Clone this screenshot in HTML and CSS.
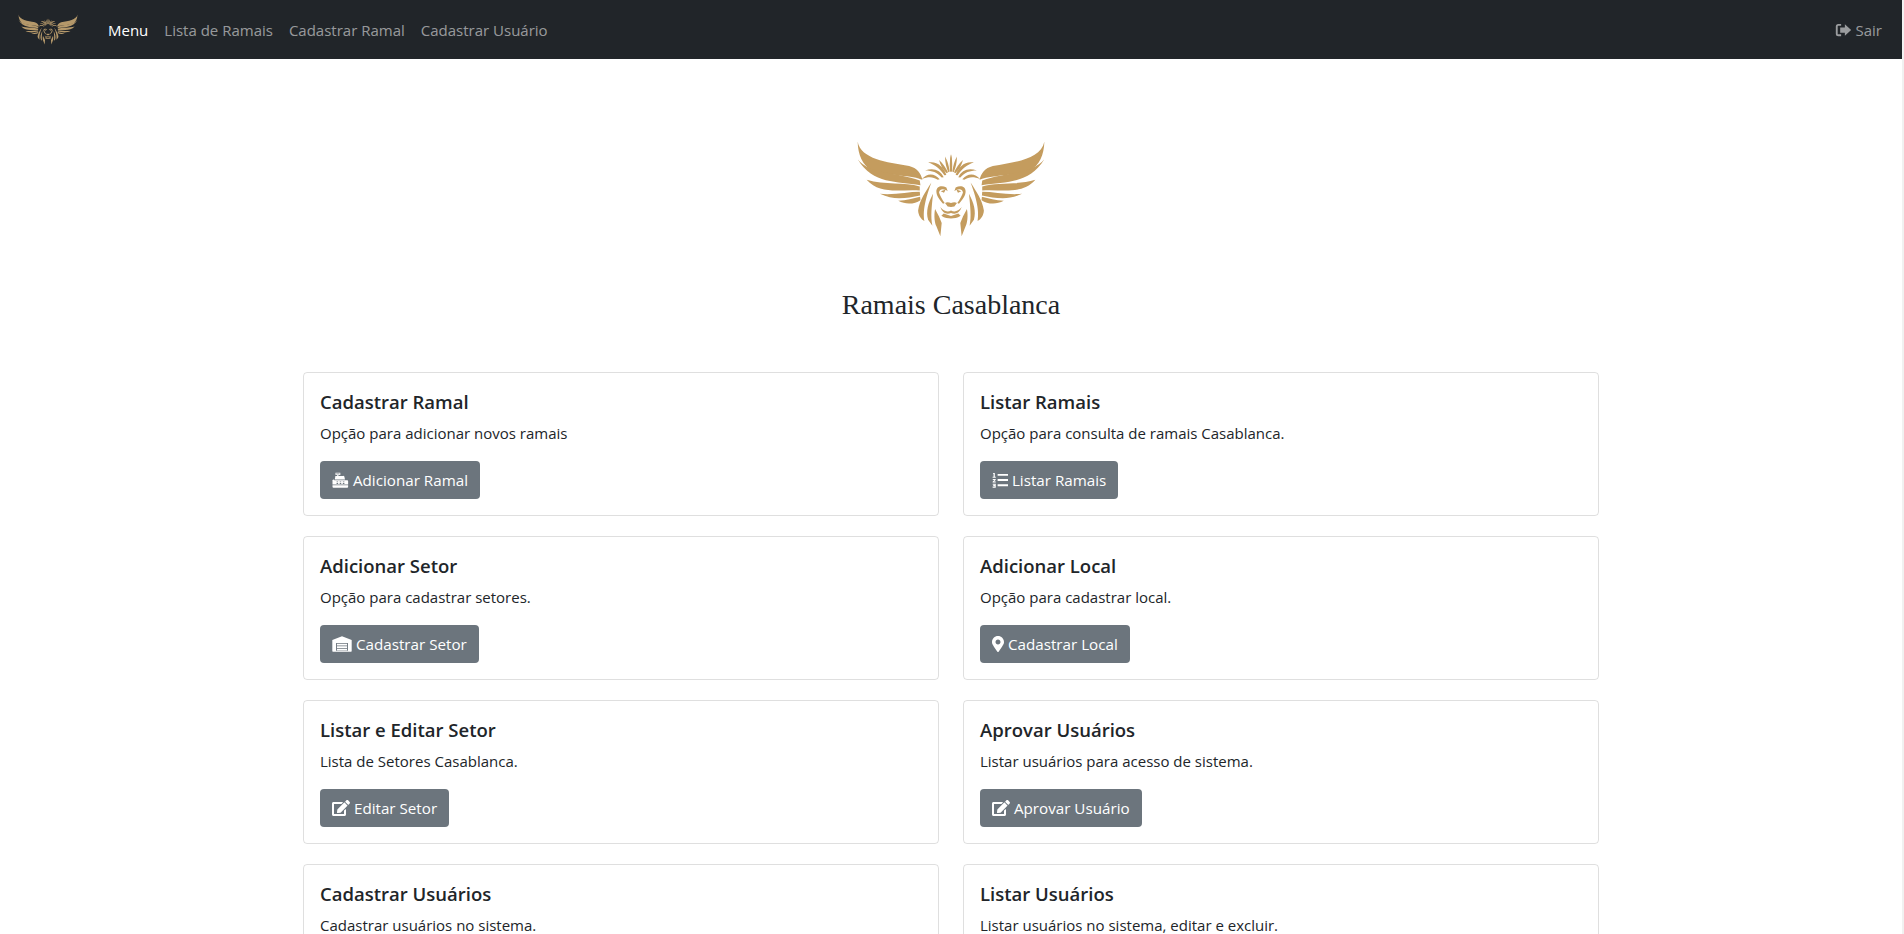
FILE: index.html
```html
<!DOCTYPE html>
<html lang="pt-BR">
<head>
    <meta charset="UTF-8">
    <meta name="viewport" content="width=device-width, initial-scale=1.0">
    <title>Ramais Casablanca</title>
    <link rel="stylesheet" href="styles.css">
</head>
<body>
    <!-- Shared drawings -->
    <svg class="defs" aria-hidden="true">
        <symbol id="lion-half" viewBox="110 60 570 295">
            <g class="gold">
                <path d="M113 65C124 118 200 126 268 138C292 144 304 160 308 180C285 166 200 168 155 150C128 136 114 104 113 65Z"/>
                <path d="M113 118C150 164 230 156 300 182L302 196C230 184 160 194 113 118Z"/>
                <path d="M140 180C195 197 255 186 300 200L300 212C240 208 180 226 140 180Z"/>
                <path d="M180 222C225 226 265 216 300 216L301 227C262 234 225 244 180 222Z"/>
                <path d="M235 243C260 243 280 236 301 231L302 241C285 252 260 256 235 243Z"/>
                <path d="M394 103C390 125 390 140 392 155L397 155C398 135 398 120 394 103Z"/>
                <path d="M376 110C376 128 380 144 386 157L390 155C388 140 384 124 376 110Z"/>
                <path d="M358 120C362 136 370 150 381 160L385 157C378 144 370 130 358 120Z"/>
                <path d="M325 128C350 122 372 140 380 165L374 166C362 148 345 134 325 128Z"/>
                <path d="M316 152C340 142 362 150 372 172L366 173C352 158 338 152 316 152Z"/>
                <path d="M306 178C322 158 345 160 360 178L354 180C340 170 325 170 306 178Z"/>
                <path d="M335 188C318 215 300 240 295 272C296 288 304 298 314 304C310 280 312 250 335 188Z"/>
                <path d="M340 222C325 250 318 275 325 300L338 318C332 290 336 260 340 222Z"/>
                <path d="M346 268C342 290 345 310 350 320L362 350L366 310L358 290Z"/>
                <path d="M365 288C375 296 385 295 394 296V289L372 281Z"/>
                <path d="M350 215C350 200 365 195 380 203L384 214C372 205 360 206 358 218C360 226 368 240 375 250L370 252C360 240 350 228 350 215Z"/>
                <path d="M363 214L378 209L373 219Z"/>
                <path d="M376 250C382 246 388 248 394 250V262L384 260Z"/>
                <path d="M362 262C372 275 384 278 394 272V280C380 285 368 280 362 262Z"/>
            </g>
        </symbol>
        <symbol id="lion" viewBox="109 60 570 295">
            <use href="#lion-half" x="110" y="60" width="570" height="295"/>
            <use href="#lion-half" x="110" y="60" width="570" height="295" transform="matrix(-1 0 0 1 788 0)"/>
        </symbol>
        <symbol id="i-register" viewBox="0 0 512 512">
            <path d="M96 20H250V92H190V124H350A30 30 0 0 1 380 150L400 240H70L90 150A20 20 0 0 1 96 124H150V92H96ZM120 44V68H226V44Z"/>
            <path d="M60 262H420L470 262A30 30 0 0 1 500 292V400H0V292A30 30 0 0 1 60 262Z"/>
            <path d="M0 420H500V470A30 30 0 0 1 470 500H30A30 30 0 0 1 0 470Z"/>
            <path class="cut" d="M130 300h50v30h-50zM230 300h50v30h-50zM330 300h50v30h-50zM130 350h50v30h-50zM230 350h50v30h-50zM330 350h50v30h-50z"/>
        </symbol>
        <symbol id="i-garage" viewBox="0 0 640 512">
            <path fill-rule="evenodd" d="M320 10L630 130V480A20 20 0 0 1 610 500H30A20 20 0 0 1 10 480V130ZM130 220V470H510V220Z"/>
            <path d="M160 250H480V300H160ZM160 330H480V380H160ZM160 410H480V460H160Z"/>
        </symbol>
        <symbol id="i-list" viewBox="0 0 512 512">
            <path d="M180 60H512V120H180ZM180 226H512V286H180ZM180 392H512V452H180Z"/>
            <path d="M40 30H90V150H120V185H20V150H50V65H30ZM24 222H120V250L70 300H120V335H20V308L74 255H24ZM24 372H120V500H20V466H84V448H40V418H84V404H24Z"/>
        </symbol>
        <symbol id="i-marker" viewBox="0 0 384 512">
            <path d="M172.268 501.67C26.97 291.031 0 253.28 0 192 0 85.961 85.961 0 192 0s192 85.961 192 192c0 61.28-26.97 99.031-172.268 309.67-9.535 13.774-29.93 13.773-39.464 0zM192 272c44.183 0 80-35.817 80-80s-35.817-80-80-80-80 35.817-80 80 35.817 80 80 80z"/>
        </symbol>
        <symbol id="i-edit" viewBox="0 0 576 512">
            <path d="M402.6 83.2l90.2 90.2c3.8 3.8 3.8 10 0 13.8L274.4 405.6l-92.8 10.3c-12.4 1.4-22.9-9.1-21.5-21.5l10.3-92.8L388.8 83.2c3.8-3.8 10-3.8 13.8 0zm162-22.9l-48.8-48.8c-15.2-15.2-39.9-15.2-55.2 0l-35.4 35.4c-3.8 3.8-3.8 10 0 13.8l90.2 90.2c3.8 3.8 10 3.8 13.8 0l35.4-35.4c15.2-15.3 15.2-40 0-55.2zM384 346.2V448H64V128h229.8c3.2 0 6.2-1.3 8.5-3.5l40-40c7.6-7.6 2.2-20.5-8.5-20.5H48C21.5 64 0 85.5 0 112v352c0 26.5 21.5 48 48 48h352c26.5 0 48-21.5 48-48V306.2c0-10.7-12.9-16-20.5-8.5l-40 40c-2.2 2.3-3.5 5.3-3.5 8.5z"/>
        </symbol>
        <symbol id="i-exit" viewBox="0 0 512 512">
            <path d="M180 60H90A80 80 0 0 0 10 140V372A80 80 0 0 0 90 452H180V392H90A20 20 0 0 1 70 372V140A20 20 0 0 1 90 120H180Z"/>
            <path d="M300 70L500 256L300 442V340H150V172H300Z"/>
        </symbol>
        <symbol id="i-user" viewBox="0 0 640 512">
            <path d="M224 256a120 120 0 1 0 0-240 120 120 0 0 0 0 240zM140 300C60 300 0 360 0 440v40a30 30 0 0 0 30 30h390a30 30 0 0 0 30-30v-40c0-80-60-140-140-140ZM520 130h50v70h70v50h-70v70h-50v-70h-70v-50h70Z"/>
        </symbol>
    </svg>

    <nav class="navbar">
        <a class="brand" href="#"><svg class="brand-logo"><use href="#lion"/></svg></a>
        <ul class="nav-links">
            <li><a class="active" href="#">Menu</a></li>
            <li><a href="#">Lista de Ramais</a></li>
            <li><a href="#">Cadastrar Ramal</a></li>
            <li><a href="#">Cadastrar Usuário</a></li>
        </ul>
        <a class="nav-exit" href="#"><svg class="icon icon-exit"><use href="#i-exit"/></svg> Sair</a>
    </nav>

    <main class="container">
        <div class="hero">
            <svg class="hero-logo"><use href="#lion"/></svg>
            <h3>Ramais Casablanca</h3>
        </div>

        <div class="cards">
            <div class="card">
                <h5>Cadastrar Ramal</h5>
                <p>Opção para adicionar novos ramais</p>
                <a class="btn" href="#"><svg class="icon icon-register"><use href="#i-register"/></svg> Adicionar Ramal</a>
            </div>
            <div class="card">
                <h5>Listar Ramais</h5>
                <p>Opção para consulta de ramais Casablanca.</p>
                <a class="btn" href="#"><svg class="icon icon-list"><use href="#i-list"/></svg> Listar Ramais</a>
            </div>
            <div class="card">
                <h5>Adicionar Setor</h5>
                <p>Opção para cadastrar setores.</p>
                <a class="btn" href="#"><svg class="icon icon-garage"><use href="#i-garage"/></svg> Cadastrar Setor</a>
            </div>
            <div class="card">
                <h5>Adicionar Local</h5>
                <p>Opção para cadastrar local.</p>
                <a class="btn" href="#"><svg class="icon icon-marker"><use href="#i-marker"/></svg> Cadastrar Local</a>
            </div>
            <div class="card">
                <h5>Listar e Editar Setor</h5>
                <p>Lista de Setores Casablanca.</p>
                <a class="btn" href="#"><svg class="icon icon-edit"><use href="#i-edit"/></svg> Editar Setor</a>
            </div>
            <div class="card">
                <h5>Aprovar Usuários</h5>
                <p>Listar usuários para acesso de sistema.</p>
                <a class="btn" href="#"><svg class="icon icon-edit"><use href="#i-edit"/></svg> Aprovar Usuário</a>
            </div>
            <div class="card">
                <h5>Cadastrar Usuários</h5>
                <p>Cadastrar usuários no sistema.</p>
                <a class="btn" href="#"><svg class="icon icon-edit"><use href="#i-user"/></svg> Cadastrar Usuário</a>
            </div>
            <div class="card">
                <h5>Listar Usuários</h5>
                <p>Listar usuários no sistema, editar e excluir.</p>
                <a class="btn" href="#"><svg class="icon icon-edit"><use href="#i-edit"/></svg> Listar Usuários</a>
            </div>
        </div>
    </main>
</body>
</html>
```

FILE: styles.css
```css
html {
    background-color: #f1f1f1;
}
body {
    margin: 0 2px 0 0;
    font-family: 'Open Sans', 'Noto Sans', sans-serif;
    font-size: 15px;
    line-height: 24px;
    color: #212529;
    background-color: #fff;
}
a {
    text-decoration: none;
}
.defs {
    display: none;
}
.gold {
    fill: var(--gold, #c49c5e);
}

/* Navbar */
.navbar {
    display: flex;
    align-items: center;
    height: 59px;
    padding: 0 20px 0 18px;
    background-color: #212529;
}
.brand {
    display: flex;
    margin-right: 22px;
}
.brand-logo {
    width: 60px;
    height: 31px;
    --gold: #b4986a;
}
.nav-links {
    display: flex;
    flex: 1;
    margin: 0;
    padding: 0;
    list-style: none;
}
.nav-links a {
    display: block;
    padding: 8px;
    color: rgba(255, 255, 255, 0.55);
}
.nav-links a.active {
    color: #fff;
}
.nav-exit {
    padding: 8px 0;
    color: rgba(255, 255, 255, 0.55);
}
.icon {
    display: inline-block;
    height: 16px;
    fill: currentColor;
    vertical-align: -2px;
}
.icon-exit {
    width: 17px;
}
.icon-register {
    width: 17px;
}
.icon-list {
    width: 16px;
}
.icon-garage {
    width: 20px;
}
.icon-marker {
    width: 12px;
}
.icon-edit {
    width: 18px;
}
.cut {
    fill: #6c757d;
}

/* Page */
.container {
    width: 1296px;
    margin: 0 auto;
}
.hero {
    display: flex;
    flex-direction: column;
    align-items: center;
    padding: 81px 0 50px;
}
.hero-logo {
    width: 190px;
    height: 98px;
}
.hero h3 {
    margin: 50px 0 0;
    font-family: 'Liberation Serif', serif;
    font-size: 28px;
    font-weight: 400;
    line-height: 34px;
}
.cards {
    display: grid;
    grid-template-columns: 1fr 1fr;
    gap: 20px 24px;
}
.card {
    height: 144px;
    box-sizing: border-box;
    padding: 17px 16px 16px;
    border: 1px solid rgba(0, 0, 0, 0.125);
    border-radius: 4px;
}
.card h5 {
    margin: 0 0 7px;
    font-size: 18.5px;
    font-weight: 600;
    line-height: 24px;
}
.card p {
    margin: 0 0 16px;
}
.btn {
    display: inline-block;
    padding: 7px 12px;
    border-radius: 4px;
    font-size: 15.2px;
    color: #fff;
    background-color: #6c757d;
}
```
